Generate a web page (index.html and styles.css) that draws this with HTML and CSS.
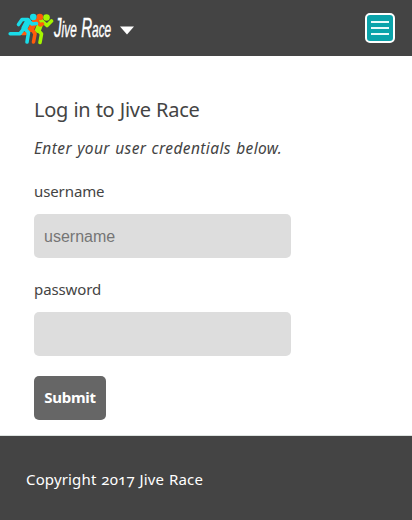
FILE: index.html
```html
<!DOCTYPE html>
<html lang="en">
<head>
<meta charset="utf-8">
<meta name="viewport" content="width=device-width, initial-scale=1">
<title>Jive Race</title>
<link rel="stylesheet" href="styles.css">
</head>
<body>
<header class="header">
  <a class="brand">
    <svg class="runners" viewBox="0 0 46 34" width="46" height="34" fill="none" stroke-linecap="round" stroke-linejoin="round">
      <g class="lime"><circle cx="38.500" cy="5.500" r="3.300"/><path class="torso" d="M33 10 30 18"/><path d="M34 9 39 13.500 43.500 9M30 18 33.500 22 32 30.500"/></g>
      <g class="orange"><circle cx="31.800" cy="5" r="3.300"/><path class="torso" d="M27 9 23 17"/><path d="M29 9 32 13 34.500 12M24 17 27 22 25.500 30M20 18 17.500 21.500H14"/></g>
      <g class="cyan"><circle cx="25.300" cy="5" r="3.300"/><path class="torso" d="M20 9.500 16.500 16"/><path d="M20 7.500H14L10.500 12.500M21 9 24 12 28.500 11.500M15.500 17 12 21.700H2.200M17 17 20.500 20.500 19 30"/></g>
    </svg>
    <span class="wordmark"><span class="script"><span class="cap">J</span>ive <span class="cap">R</span>ace</span></span>
    <svg class="caret" viewBox="0 0 14 9" width="14" height="9"><path d="M0 .5H14L7 8.500Z" fill="#fff"/></svg>
  </a>
  <button class="menu" aria-label="Menu"><i></i><i></i><i></i></button>
</header>
<main class="main">
  <h1 class="title">Log in to Jive Race</h1>
  <p class="intro">Enter your user credentials below.</p>
  <form class="form">
    <label class="label" for="username">username</label>
    <input class="field" id="username" type="text" placeholder="username">
    <label class="label" for="password">password</label>
    <input class="field" id="password" type="password">
    <button class="submit" type="button">Submit</button>
  </form>
</main>
<footer class="footer">Copyright <span class="year">2017</span> Jive Race</footer>
</body>
</html>
```
FILE: styles.css
```css
* { box-sizing: border-box; }
body { margin: 0; height: 520px; display: flex; flex-direction: column; overflow: hidden; background: #fff; color: #444; font: 15px/20px "Noto Sans", sans-serif; }
.header { height: 56px; flex: none; display: flex; align-items: center; justify-content: space-between; padding: 0 17px 0 8px; background: #444; }
.brand { display: flex; align-items: center; color: #fff; }
.runners { margin-top: 2px; }
.runners g { stroke: currentColor; stroke-width: 3.6; }
.runners circle { fill: currentColor; stroke: none; }
.runners .torso { stroke-width: 6; }
.lime { color: #a5f500; }
.orange { color: #ff5b0b; }
.cyan { color: #19dce8; }
.wordmark { width: 57px; height: 30px; }
.script { display: inline-block; white-space: nowrap; font: italic 22px/30px "Liberation Sans", sans-serif; word-spacing: 2px; -webkit-text-stroke: .4px #fff; transform: translateY(1px) scaleX(.54); transform-origin: 0 50%; }
.cap { font-size: 28px; line-height: 1; }
.caret { margin: 4px 0 0 8.5px; }
.menu { width: 30px; height: 30px; border: 2px solid #fff; border-radius: 5px; background: #0aa3aa; padding: 0; display: flex; flex-direction: column; align-items: center; justify-content: center; gap: 4px; }
.menu i { width: 18px; height: 2px; background: #e8fafa; }
.main { height: 380px; flex: none; padding: 41px 34px 0; border-bottom: 1px solid #dde3e0; }
.title { margin: 0; font-weight: 400; font-size: 20px; line-height: 26px; letter-spacing: -.3px; word-spacing: .5px; white-space: nowrap; }
.intro { margin: 15px 0 0; font-style: italic; font-size: 15.5px; letter-spacing: .4px; word-spacing: .8px; white-space: nowrap; }
.form { display: flex; flex-direction: column; align-items: flex-start; margin-top: 23px; }
.label { letter-spacing: -.1px; }
.field { width: 257px; height: 44px; border: 0; border-radius: 5px; background: #ddd; padding: 2px 10px 0; margin: 13px 0 21px; font: 16px "Liberation Sans", sans-serif; }
.field::placeholder { color: #757575; opacity: 1; }
.submit { width: 72px; height: 44px; margin-top: -1px; border: 0; border-radius: 5px; padding: 0 0 2px; background: #666; color: #fff; font: 700 15px/20px "Noto Sans", sans-serif; letter-spacing: -.3px; }
.footer { flex: 1; padding: 33px 26px; background: #444; color: #fff; letter-spacing: .15px; word-spacing: .8px; white-space: nowrap; }
.year { font-variant-numeric: oldstyle-nums; }
```
